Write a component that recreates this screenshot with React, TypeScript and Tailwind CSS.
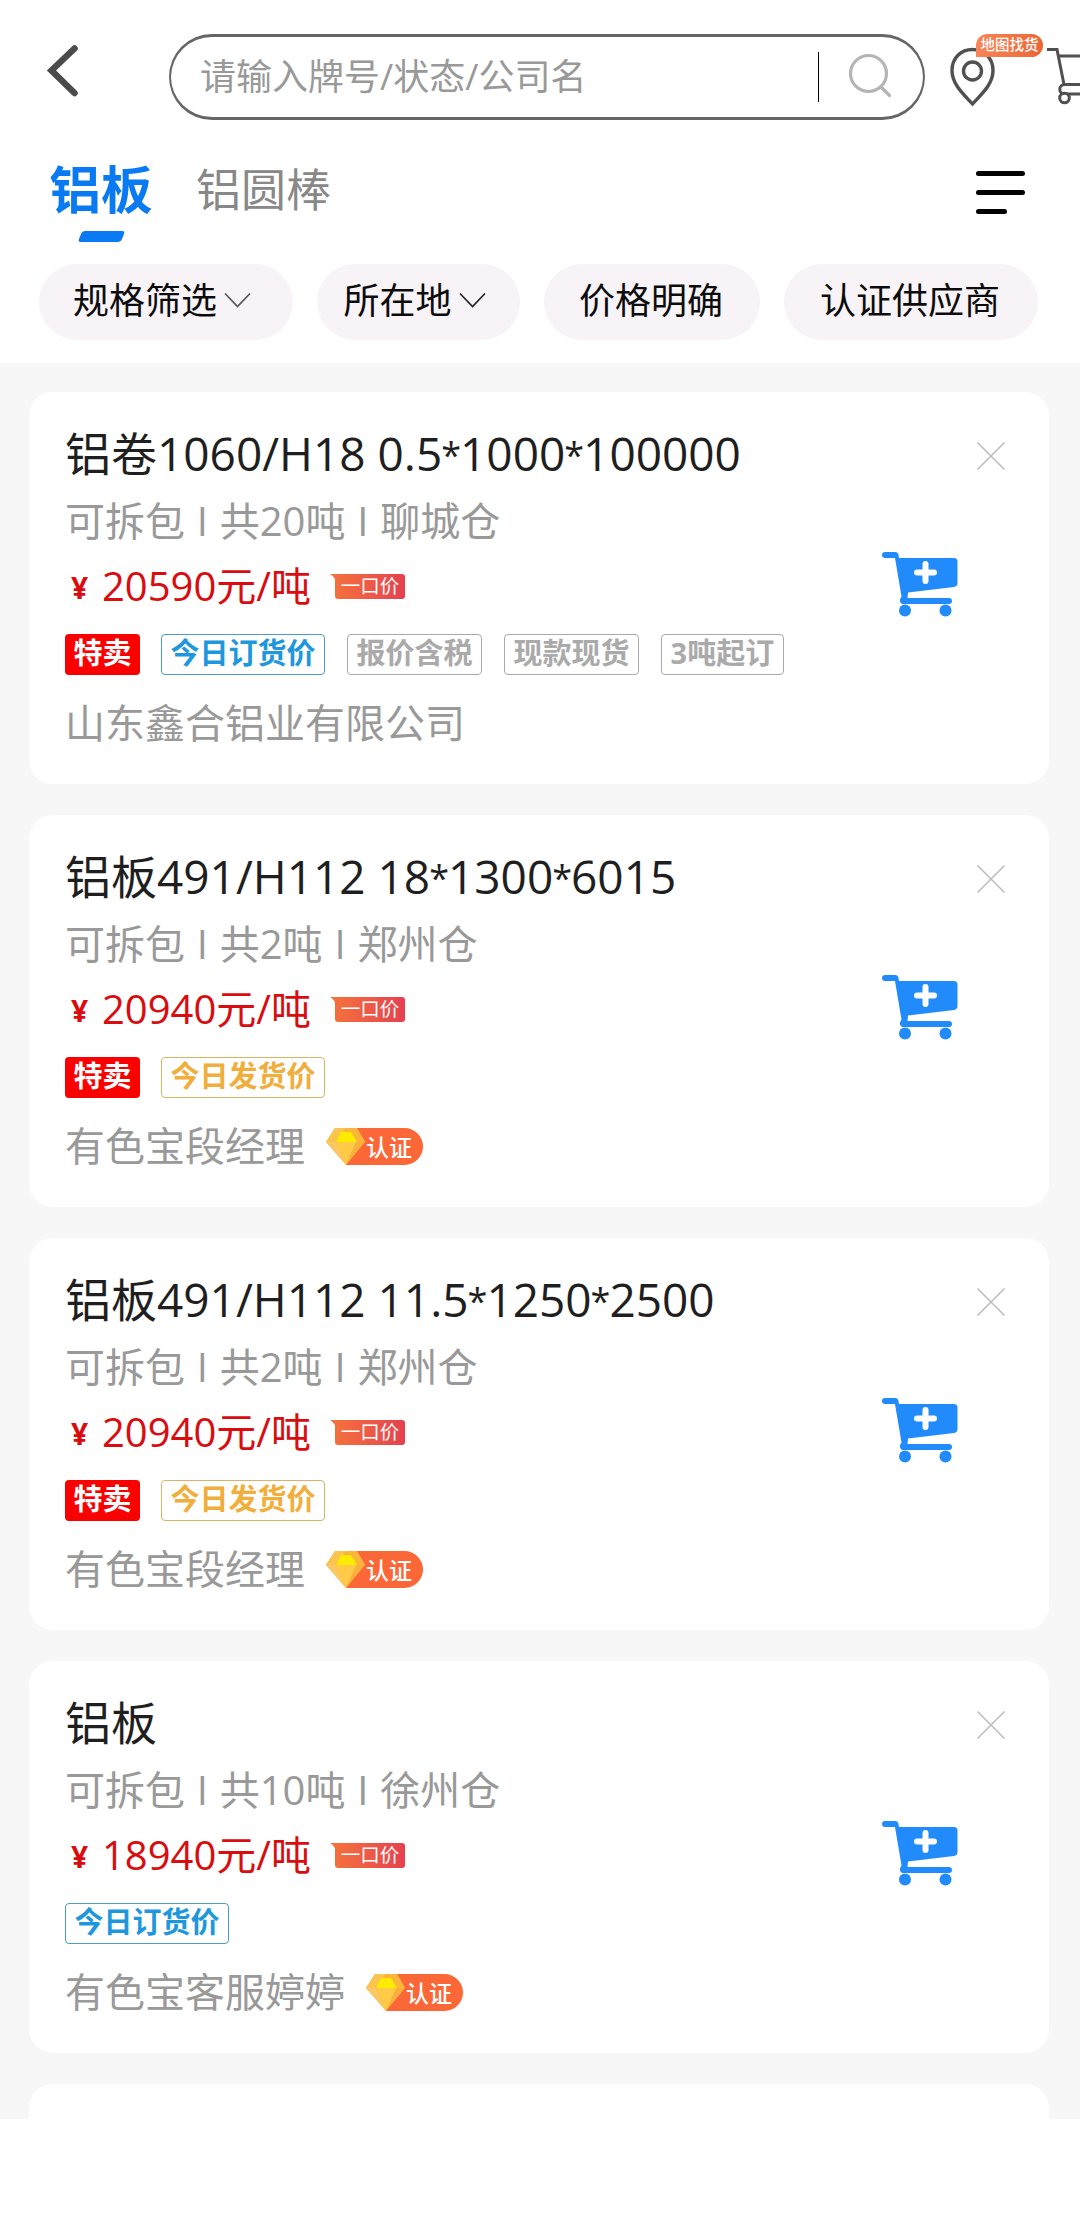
import { Fragment } from 'react'
import clsx from 'clsx'

type TagKind = 'sale' | 'order' | 'ship' | 'plain'

interface Tag {
  kind: TagKind
  label: string
}

interface Listing {
  title: string
  meta: string
  price: string
  tags: Tag[]
  seller: string
  certified: boolean
}

const listings: Listing[] = [
  {
    title: '铝卷1060/H18 0.5*1000*100000',
    meta: '可拆包 I 共20吨 I 聊城仓',
    price: '20590元/吨',
    tags: [
      { kind: 'sale', label: '特卖' },
      { kind: 'order', label: '今日订货价' },
      { kind: 'plain', label: '报价含税' },
      { kind: 'plain', label: '现款现货' },
      { kind: 'plain', label: '3吨起订' },
    ],
    seller: '山东鑫合铝业有限公司',
    certified: false,
  },
  {
    title: '铝板491/H112 18*1300*6015',
    meta: '可拆包 I 共2吨 I 郑州仓',
    price: '20940元/吨',
    tags: [
      { kind: 'sale', label: '特卖' },
      { kind: 'ship', label: '今日发货价' },
    ],
    seller: '有色宝段经理',
    certified: true,
  },
  {
    title: '铝板491/H112 11.5*1250*2500',
    meta: '可拆包 I 共2吨 I 郑州仓',
    price: '20940元/吨',
    tags: [
      { kind: 'sale', label: '特卖' },
      { kind: 'ship', label: '今日发货价' },
    ],
    seller: '有色宝段经理',
    certified: true,
  },
  {
    title: '铝板',
    meta: '可拆包 I 共10吨 I 徐州仓',
    price: '18940元/吨',
    tags: [{ kind: 'order', label: '今日订货价' }],
    seller: '有色宝客服婷婷',
    certified: true,
  },
]

const tagStyles: Record<TagKind, string> = {
  sale: 'bg-[#fa0000] text-white px-[8.5px] -mr-px',
  order: 'border border-[#4a9cc4] text-[#1f97dc] px-[8.5px]',
  ship: 'border border-[#d8b463] text-[#f0ae3c] px-[8.5px]',
  plain: 'border border-[#aaaaaa] text-[#aaaaaa] px-[8.5px]',
}

function SearchBar() {
  return (
    <div className="flex h-[86px] w-[756px] shrink-0 items-center rounded-full border-x-2 border-y-3 border-[#666666] pl-[29px]">
      <span className="w-[618px] text-[36px] leading-[80px] text-[#999999]">请输入牌号/状态/公司名</span>
      <div className="h-[50px] w-px bg-black" />
      <svg className="ml-[28px] h-[50px] w-[50px]" viewBox="0 0 50 50" fill="none" stroke="#b5b5b5" strokeWidth="3.2">
        <circle cx="21.500" cy="21.500" r="18" />
        <path d="M34 35l8.500 8.500" strokeLinecap="round" />
      </svg>
    </div>
  )
}

function TopBar() {
  return (
    <div className="flex h-[86px] items-center overflow-visible">
      <svg className="ml-[42px] h-[86px] w-[40px] shrink-0" viewBox="0 0 40 86" fill="none" stroke="#4b4b4b" strokeWidth="6.500">
        <path d="M32.500 14.500L9.500 36.500L32.500 59" strokeLinecap="round" />
      </svg>
      <div className="w-[87px] shrink-0" />
      <SearchBar />
      <div className="relative ml-[23px] h-[86px] w-[50px] shrink-0">
        <svg className="h-[86px] w-[50px]" viewBox="0 0 50 86" fill="none" stroke="#505050" strokeWidth="3.400">
          <path d="M24.500 70C17 61.500 4 51 4 36.500C4 24 13 15.500 24.500 15.500S45 24 45 36.500C45 51 32 61.500 24.500 70Z" />
          <circle cx="24.500" cy="37" r="9" />
        </svg>
        <span className="absolute top-0 left-[28px] flex h-[23px] w-[67px] items-center justify-center rounded-full rounded-bl-[6px] bg-linear-to-r from-[#f98558] to-[#ec6534] text-[14.500px] leading-none font-medium whitespace-nowrap text-white">
          地图找货
        </span>
      </div>
      <svg className="ml-[49px] h-[86px] w-[60px] shrink-0" viewBox="0 0 60 86" fill="none" stroke="#505050" strokeWidth="3">
        <path d="M0 15.500H10L17 50.500H60M11 22H60" />
        <path d="M18 50.500C11 50.500 11 60 18 60H60" />
        <circle cx="17.500" cy="64" r="4.800" fill="#ffffff" />
      </svg>
    </div>
  )
}

function Tabs() {
  return (
    <div className="mt-[33px] flex h-[89px] items-start">
      <div className="ml-[49px] flex w-[104px] flex-col items-center">
        <span className="h-[72px] text-[51.500px] leading-[72px] font-bold text-[#0a7af2]">铝板</span>
        <span className="mt-[6px] h-[11px] w-[43px] -skew-x-[22deg] rounded-[3px] bg-[#0a7af2]" />
      </div>
      <span className="ml-[43px] text-[45px] leading-[74px] text-[#888888]">铝圆棒</span>
      <div className="mt-[18px] mr-[55px] ml-auto flex w-[49px] flex-col gap-[14px]">
        <span className="h-[5px] w-full rounded-full bg-black" />
        <span className="h-[5px] w-full rounded-full bg-black" />
        <span className="h-[5px] w-[31px] rounded-full bg-black" />
      </div>
    </div>
  )
}

function Chevron({ color }: { color: string }) {
  return (
    <svg className="ml-[7px] h-[16px] w-[27px]" viewBox="0 0 27 16" fill="none" stroke={color} strokeWidth="1.6">
      <path d="M1 0.500L13.500 13.500L26 0.500" />
    </svg>
  )
}

function Filters() {
  const chip = 'flex h-[76px] items-center justify-center rounded-full bg-[#f7f3f7] pb-[2px] text-[36px] text-[#0c0c0c]'
  return (
    <div className="mt-[22px] flex gap-[24px] pl-[39px]">
      <div className={clsx(chip, 'w-[254px] pr-[8px]')}>
        规格筛选
        <Chevron color="#555555" />
      </div>
      <div className={clsx(chip, 'w-[203px] pr-[8px]')}>
        所在地
        <Chevron color="#222222" />
      </div>
      <div className={clsx(chip, 'w-[216px] pr-[2px]')}>价格明确</div>
      <div className={clsx(chip, 'w-[254px] pr-[2px]')}>认证供应商</div>
    </div>
  )
}

function FixedPriceBadge() {
  return (
    <span className="relative -top-px ml-[24px] flex h-[25px] w-[70px] items-center justify-center rounded-[3px] rounded-tl-none bg-linear-to-r from-[#f4703c] to-[#e5404f] pb-px text-[19.5px] leading-none text-white">
      <svg className="absolute top-0 -left-[5px] h-[8px] w-[6px]" viewBox="0 0 6 8" fill="#f4703c">
        <path d="M0 0H6V8C5 4 3 2 0 0Z" />
      </svg>
      一口价
    </span>
  )
}

function CertifiedBadge() {
  return (
    <span className="relative ml-[21px] flex h-[37px] w-[97px] items-center">
      <svg className="absolute inset-0 h-full w-full" viewBox="0 0 97 37">
        <path d="M20 0H78.500A18.500 18.500 0 0 1 78.500 37H20Z" fill="#fb6737" />
        <path d="M9 0H31L39 14L20 37L0 14Z" fill="#fbb03c" />
        <path d="M9 0H20L10 14H0Z" fill="#fac44e" />
        <path d="M0 14H10L20 37Z" fill="#fcc765" />
        <path d="M10 14H30L20 37Z" fill="#ffca45" />
        <path d="M31 0L39 14H30L20 0Z" fill="#fcb63a" />
        <path d="M15 4H25L31 14H10Z" fill="#fdec00" />
      </svg>
      <span className="relative ml-[40px] pt-[2px] text-[23px] leading-none font-medium text-white">认证</span>
    </span>
  )
}

function AddToCart() {
  return (
    <svg className="h-[66px] w-[76px]" viewBox="0 0 76 66" fill="#218bfb">
      <path d="M3 0H13Q16 0 16.500 3L17 6H72Q75.500 6 75.500 9.500V31Q75.500 34.500 72 35L26 40.500L25.500 46H67A3 3 0 0 1 67 52H20Q16 49.500 19.500 44.500L13 6H3A3 3 0 0 1 3 0Z" />
      <circle cx="23" cy="58.500" r="6" />
      <circle cx="63.500" cy="58.500" r="6" />
      <path d="M43.500 12V29M35 20.500H52" stroke="#ffffff" strokeWidth="6" strokeLinecap="round" />
    </svg>
  )
}

// dimensions are joined by a small raised asterisk
function Title({ text }: { text: string }) {
  return (
    <div className="h-[66px] text-[46px] leading-[64px] text-[#1f1f1f]">
      {text.split('*').map((part, i) => (
        <Fragment key={i}>
          {i > 0 && <span className="relative -top-[3px] -mx-px text-[36px] leading-none font-medium">*</span>}
          {part}
        </Fragment>
      ))}
    </div>
  )
}

function ListingCard({ item }: { item: Listing }) {
  return (
    <div className="flex h-[392px] rounded-[24px] bg-white pt-[29px] pl-[36px]">
      <div className="flex flex-1 flex-col whitespace-nowrap">
        <Title text={item.title} />
        <div className="h-[68px] text-[40px] leading-[67px] text-[#999999] [word-spacing:1.4px]">{item.meta}</div>
        <div className="flex h-[64px] items-center text-[#d90c10]">
          <span className="ml-[6px] w-[31px] pt-[2px] text-[30px] leading-[60px] font-bold">¥</span>
          <span className="-mt-[2px] text-[40px] leading-[62px]">{item.price}</span>
          <FixedPriceBadge />
        </div>
        <div className="mt-[15px] flex gap-[22px]">
          {item.tags.map((tag) => (
            <span
              key={tag.label}
              className={clsx(
                'flex h-[41px] items-center rounded-[4px] pb-[4px] text-[29px] leading-none font-bold',
                tagStyles[tag.kind],
              )}
            >
              {tag.label}
            </span>
          ))}
        </div>
        <div className="mt-[15px] flex h-[66px] items-center text-[40px] leading-[66px] text-[#999999]">
          {item.seller}
          {item.certified && <CertifiedBadge />}
        </div>
      </div>
      <div className="flex w-[167px] flex-col">
        <svg className="mt-[20px] ml-[94px] h-[30px] w-[30px]" viewBox="0 0 30 30" fill="none" stroke="#bdbdbd" strokeWidth="1.6">
          <path d="M1.500 1.500L28.500 28.500M28.500 1.500L1.500 28.500" />
        </svg>
        <div className="mt-[81px]">
          <AddToCart />
        </div>
      </div>
    </div>
  )
}

export default function App() {
  return (
    <div className="h-[2235px] w-[1080px] overflow-hidden bg-white font-['Open_Sans','Noto_Sans_CJK_SC',sans-serif]">
      <header className="h-[363px] overflow-hidden pt-[34px]">
        <TopBar />
        <Tabs />
        <Filters />
      </header>
      <main className="flex h-[1756px] flex-col gap-[31px] overflow-hidden bg-[#f7f7f7] pt-[29px] pr-[31px] pl-[29px] *:shrink-0">
        {listings.map((item, i) => (
          <ListingCard key={i} item={item} />
        ))}
        <div className="h-[392px] rounded-[24px] bg-white" />
      </main>
    </div>
  )
}
